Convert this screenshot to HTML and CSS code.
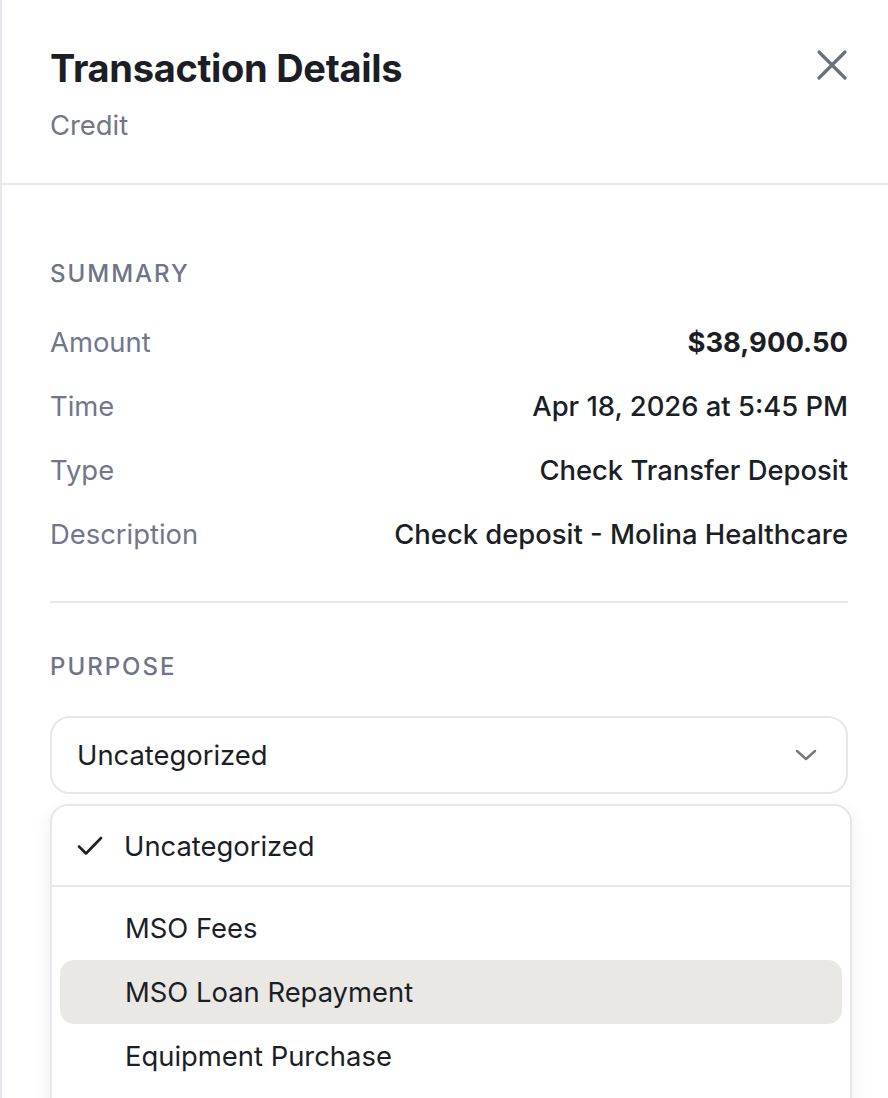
FILE: index.html
```html
<!DOCTYPE html>
<html>
<head>
<meta charset="utf-8">
<link rel="stylesheet" href="styles.css">
</head>
<body>
<div class="panel">
  <header class="head">
    <div class="head-text">
      <h1 class="title">Transaction Details</h1>
      <div class="subtitle">Credit</div>
    </div>
    <button class="close" aria-label="Close">
      <svg width="32" height="32" viewBox="0 0 32 32"><path d="M3 3 L29 29 M29 3 L3 29" stroke="#6b7080" stroke-width="3.2" stroke-linecap="round" fill="none"/></svg>
    </button>
  </header>
  <section class="summary">
    <div class="label">SUMMARY</div>
    <div class="row"><span class="key">Amount</span><span class="val bold">$38,900.50</span></div>
    <div class="row"><span class="key">Time</span><span class="val">Apr 18, 2026 at 5:45 PM</span></div>
    <div class="row"><span class="key">Type</span><span class="val">Check Transfer Deposit</span></div>
    <div class="row"><span class="key">Description</span><span class="val">Check deposit - Molina Healthcare</span></div>
  </section>
  <section class="purpose">
    <div class="label">PURPOSE</div>
    <div class="select-wrap">
      <div class="select">
        <span>Uncategorized</span>
        <svg width="24" height="14" viewBox="0 0 24 14"><path d="M3 3 L12 11 L21 3" stroke="#77777c" stroke-width="2.4" stroke-linecap="round" stroke-linejoin="round" fill="none"/></svg>
      </div>
      <div class="menu">
        <div class="opt selected">
          <svg class="check" width="26" height="22" viewBox="0 0 26 22"><path d="M2 11.5 L9 18.5 L24 3" stroke="#1f2129" stroke-width="2.6" stroke-linecap="round" stroke-linejoin="round" fill="none"/></svg>
          <span>Uncategorized</span>
        </div>
        <div class="opts">
          <div class="opt">MSO Fees</div>
          <div class="opt hover">MSO Loan Repayment</div>
          <div class="opt">Equipment Purchase</div>
        </div>
      </div>
    </div>
  </section>
</div>
</body>
</html>
```

FILE: styles.css
```css
* { box-sizing: border-box; }
html, body { margin: 0; padding: 0; background: #fff; overflow: hidden; }
body {
  font-family: Inter, "Liberation Sans", sans-serif;
  color: #1e2028;
  width: 888px;
  height: 1098px;
}
.panel {
  border-left: 2px solid #e6e7ec;
  height: 1098px;
  overflow: hidden;
}
.head {
  display: flex;
  justify-content: space-between;
  align-items: flex-start;
  padding: 45px 40px 40px 48px;
  border-bottom: 2px solid #e6e7ec;
}
.title {
  margin: 0;
  font-size: 38px;
  line-height: 46px;
  font-weight: 700;
  letter-spacing: -0.3px;
  color: #1c1e26;
}
.subtitle {
  margin-top: 16px;
  font-size: 27.4px;
  line-height: 36px;
  color: #717688;
}
.close {
  border: 0;
  background: none;
  padding: 0;
  margin-top: 4px;
  margin-right: 0;
  width: 32px;
  height: 32px;
  cursor: pointer;
}
.close svg { display: block; }
.label {
  font-size: 24px;
  line-height: 32px;
  letter-spacing: 2px;
  font-weight: 500;
  color: #6f7486;
}
.summary {
  margin: 0 40px 0 48px;
  padding: 73px 0 35px;
  border-bottom: 2px solid #e6e7ec;
}
.summary .label { margin-bottom: 20px; }
.row {
  display: flex;
  justify-content: space-between;
  align-items: center;
  height: 64px;
  font-size: 27.4px;
}
.key { color: #71768a; }
.val { color: #1c1e26; font-weight: 500; }
.val.bold { font-weight: 700; }
.purpose {
  margin: 0 40px 0 48px;
  padding-top: 48px;
}
.purpose .label { margin-bottom: 33px; }
.select-wrap { position: relative; }
.select {
  display: flex;
  justify-content: space-between;
  align-items: center;
  height: 78px;
  border: 2px solid #e6e7ec;
  border-radius: 20px;
  padding: 0 28px 0 25px;
  font-size: 27.4px;
  color: #1c1e26;
}
.menu {
  position: absolute;
  top: 88px;
  left: 0;
  width: 802px;
  border: 2px solid #e6e7ec;
  border-radius: 18px;
  background: #fff;
  box-shadow: 0 6px 18px rgba(20, 24, 40, 0.08);
  font-size: 27.4px;
  color: #1c1e26;
}
.opt {
  display: flex;
  align-items: center;
  height: 64px;
  padding-left: 65px;
  border-radius: 14px;
}
.opt.selected {
  height: 81px;
  padding-left: 25px;
  border-bottom: 2px solid #e6e7ec;
  border-radius: 0;
}
.opt.selected .check { margin-right: 21px; }
.opts { padding: 9px 8px 40px; }
.opt.hover { background: #e9e8e5; }
```
